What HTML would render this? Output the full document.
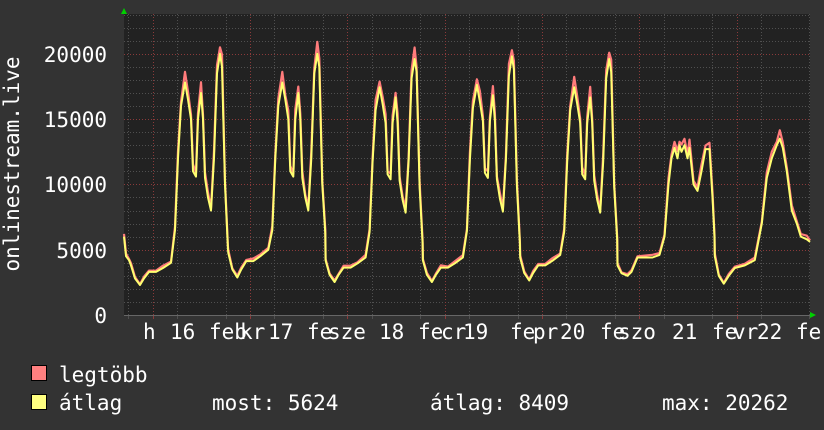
<!DOCTYPE html>
<html><head><meta charset="utf-8"><style>
html,body{margin:0;padding:0;background:#333;}
svg{display:block}
text{font-family:"DejaVu Sans Mono","Liberation Mono",monospace;font-size:21px;fill:#fff;}
</style></head><body>
<svg id="s" width="824" height="430" viewBox="0 0 824 430" xmlns="http://www.w3.org/2000/svg">
<rect width="824" height="430" fill="#333"/>
<rect x="124" y="14" width="686" height="301" fill="#222"/>
<g id="grid"></g>
<path id="red" fill="none" stroke="#ff7b7b" stroke-width="2.2" stroke-linejoin="round"/>
<path id="yel" fill="none" stroke="#ffff70" stroke-width="2" stroke-linejoin="round"/>
<polygon points="121,14 127,14 124,8" fill="#00d000"/>
<polygon points="810,312 810,318 816,315" fill="#00d000"/>
<g text-anchor="end">
<text x="107" y="62">20000</text>
<text x="107" y="127">15000</text>
<text x="107" y="192">10000</text>
<text x="107" y="258">5000</text>
<text x="107" y="323">0</text>
</g>
<text transform="translate(19,164) rotate(-90)" text-anchor="middle">onlinestream.live</text>
<g>
<text x="143" y="339">h</text><text x="170" y="339">16</text>
<text x="209" y="339">feb</text><text x="240" y="339">kr</text><text x="268" y="339">17</text>
<text x="307" y="339">fe</text><text x="328" y="339">sze</text><text x="379" y="339">18</text>
<text x="418" y="339">fe</text><text x="441" y="339">cr</text><text x="463" y="339">19</text>
<text x="510" y="339">fe</text><text x="533" y="339">pr</text><text x="560" y="339">20</text>
<text x="600" y="339">fe</text><text x="618" y="339">szo</text><text x="672" y="339">21</text>
<text x="712" y="339">fe</text><text x="733" y="339">vr</text><text x="757" y="339">22</text>
<text x="796" y="339">fe</text>
</g>
<rect x="31.5" y="365.5" width="15" height="15" fill="#ff8080" stroke="#000"/>
<rect x="31.5" y="394.5" width="15" height="15" fill="#ffff80" stroke="#000"/>
<text x="59" y="382">legtöbb</text>
<text x="59" y="410">átlag</text>
<text x="212" y="410">most: 5624</text>
<text x="430" y="410">átlag: 8409</text>
<text x="662" y="410">max: 20262</text>
</svg>
<script>
(function(){
var NS="http://www.w3.org/2000/svg",g=document.getElementById('grid');
function Y(v){return 315-v*0.01306;}
function line(x1,y1,x2,y2,c,d){var l=document.createElementNS(NS,'line');l.setAttribute('x1',x1);l.setAttribute('y1',y1);l.setAttribute('x2',x2);l.setAttribute('y2',y2);l.setAttribute('stroke',c);l.setAttribute('stroke-width',1);if(d)l.setAttribute('stroke-dasharray',d);g.appendChild(l);}
for(var v=1000;v<=23000;v+=1000){var y=Math.round(Y(v))+0.5;line(124,y,810,y,v%5000?'#505050':'#8a3a3a','1,2');}
for(var k=-1;k<8;k++){var m=152.7+97.3*k;
 [[m,'#8a3a3a'],[m+24.3,'#505050'],[m+72.9,'#505050']].forEach(function(a){var x=Math.round(a[0])+0.5;if(x>124&&x<810){line(x,14,x,315,a[1],'1,2');line(x,315,x,319,a[1]);}});}
line(124,315.5,810,315.5,'#666');
var wd=[[0,3800],[4,2800],[9,2300],[13,2800],[18,3300],[25,3300],[32,3600],[40,4000],[44,6500],[47,12000],[50,16000],[54,17800],[57,16500],[60,15000],[62,11000],[65,10600],[67,15000],[70,17000],[72,15000],[74,10500],[77,9000],[80,8000],[83,12000],[86,18500],[89,20000],[91,19000],[94,10000],[97,5000]];
var we=[[0,3800],[4,3200],[10,3000],[14,3300],[20,4400],[35,4400],[42,4600],[47,6000],[51,10000],[54,12000],[57,12800],[60,12000],[62,13000],[64,12500],[67,13000],[70,12000],[72,12800],[76,10000],[80,9500],[84,11000],[88,12700],[92,12700],[95,9000],[97,6000]];
var last=[[0,4500],[4,3000],[9,2400],[14,3000],[20,3600],[30,3800],[40,4200],[47,7000],[52,10500],[57,12000],[62,13000],[65,13500],[68,12800],[72,11000],[77,8000],[82,7000],[86,6000],[92,5800],[96,5600]];
var sc=[[1,1],[1,1.25],[0.98,1.1],[0.99,1.1],[0.98,1.15],[1,1],[1,1]];
var pts=[[124,6000],[126,4500],[129,4200]];
for(var c=0;c<7;c++){var s=131+97.3*c,t=c<5?wd:(c==5?we:last);
 t.forEach(function(p){var v=p[1];if(c<5){v=v>6000?v*sc[c][0]:v*sc[c][1];}
 var x=s+p[0];if(x<=810)pts.push([x,v]);});}
pts.push([810,5600]);
var dy='',dr='';
pts.forEach(function(p,i){var j=Math.sin(i*2.3)*0.5+0.5;var r=p[1]*(1.02+0.03*j);
 dy+=(i?'L':'M')+p[0].toFixed(1)+','+Y(p[1]).toFixed(1);
 dr+=(i?'L':'M')+p[0].toFixed(1)+','+Y(r).toFixed(1);});
document.getElementById('yel').setAttribute('d',dy);
document.getElementById('red').setAttribute('d',dr);
})();
</script>
</body></html>
